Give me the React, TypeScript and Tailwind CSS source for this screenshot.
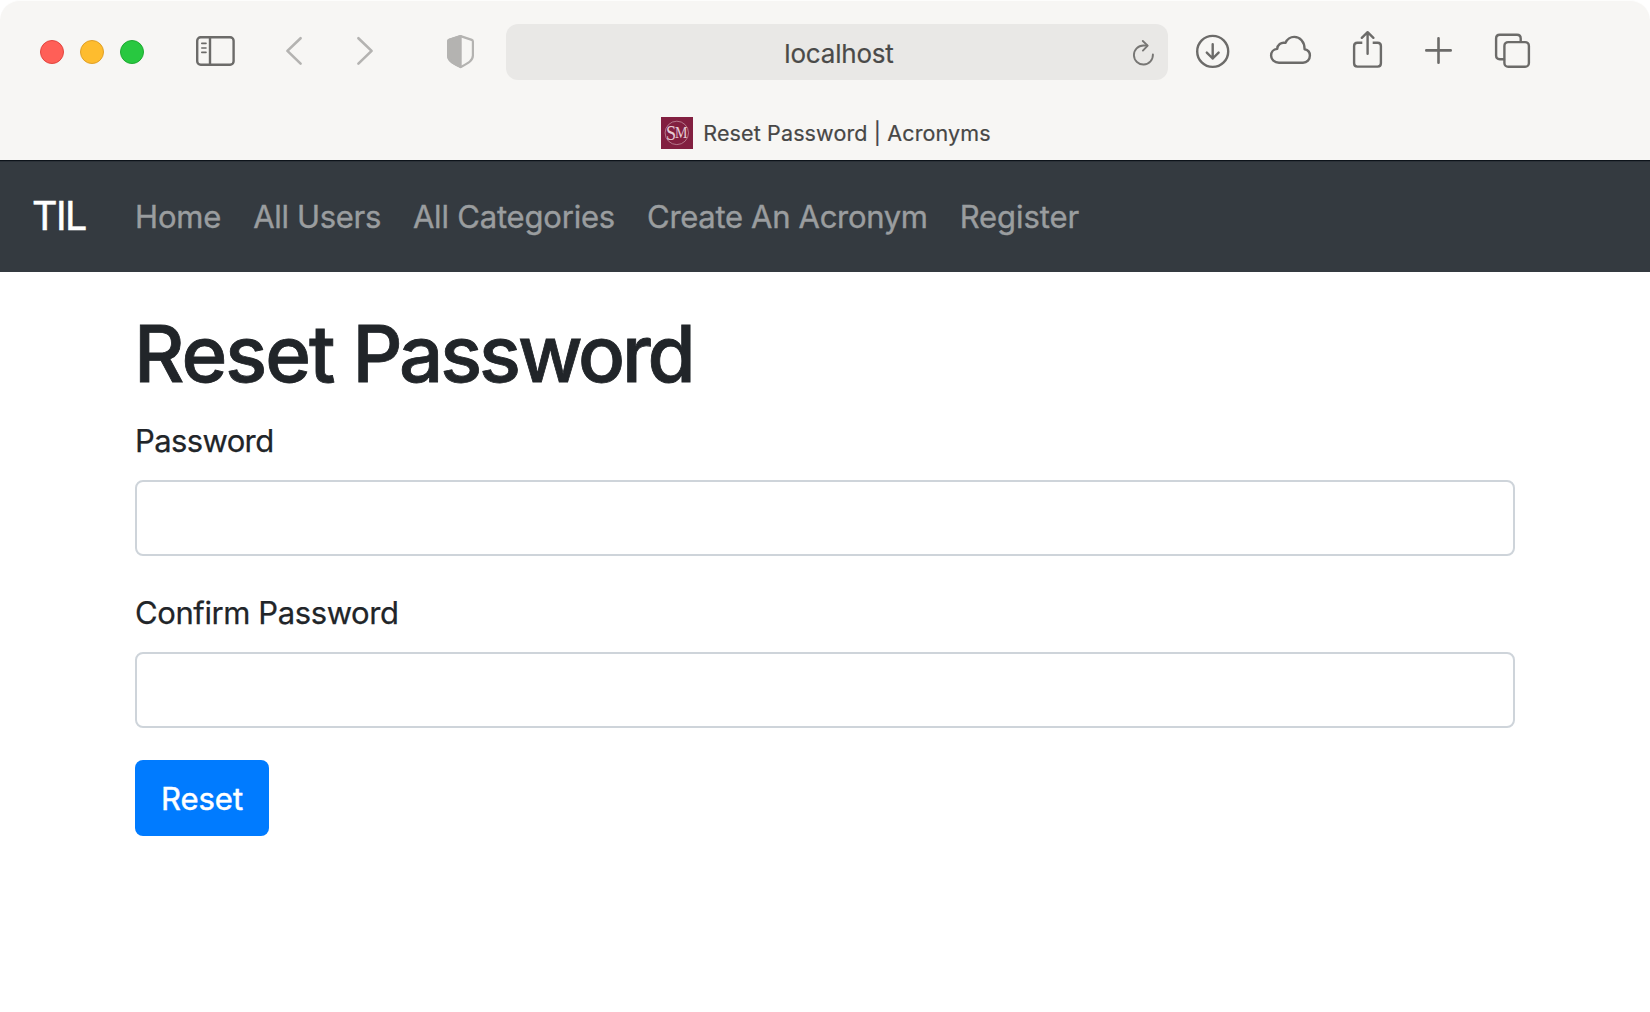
import type { ReactNode } from "react";

function Icon({ width, className, children }: { width: number; className: string; children: ReactNode }) {
  return (
    <svg
      width={width}
      height={44}
      viewBox={`0 0 ${width} 44`}
      fill="none"
      stroke="currentColor"
      strokeWidth={2.4}
      strokeLinecap="round"
      strokeLinejoin="round"
      className={`shrink-0 ${className}`}
    >
      {children}
    </svg>
  );
}

function Toolbar() {
  return (
    <div className="flex h-[102px] items-center pl-10 text-[#6c6b69]">
      <div className="flex gap-4">
        <span className="size-6 rounded-full border border-[#e2463f] bg-[#ff5f57]" />
        <span className="size-6 rounded-full border border-[#e0a028] bg-[#febc2e]" />
        <span className="size-6 rounded-full border border-[#1eaa31] bg-[#28c840]" />
      </div>

      <Icon width={41} className="ml-[51px]">
        <rect x="2.2" y="7.2" width="36.4" height="27.5" rx="3.5" />
        <path d="M15 7.2V34.7" />
        <path d="M6.8 13.4H11M6.8 18H11M6.8 22.4H11" strokeWidth="1.6" />
      </Icon>
      <Icon width={18} className="ml-[49px] text-[#b4b3b1]">
        <path d="M15.6 8.2 2.4 20.9 15.6 33.6" strokeWidth="2.6" />
      </Icon>
      <Icon width={18} className="ml-[53px] text-[#b4b3b1]">
        <path d="M2.4 8.2 15.6 20.9 2.4 33.6" strokeWidth="2.6" />
      </Icon>
      <Icon width={29} className="ml-[72px] text-[#b4b3b1]">
        <path d="M14.6 6.1 3.2 9.9Q2.1 10.3 2.1 11.5V25.5C2.1 31.3 8.6 33.9 14.6 37Z" fill="currentColor" strokeWidth="2.2" />
        <path
          d="M14.6 6.1 3.2 9.9Q2.1 10.3 2.1 11.5V25.5C2.1 31.3 8.6 33.9 14.6 37C20.6 33.9 26.9 31.3 26.9 25.5V11.5Q26.9 10.3 25.8 9.9Z"
          strokeWidth="2.2"
        />
      </Icon>

      <div className="ml-[31px] flex h-14 w-[662px] shrink-0 items-center rounded-xl bg-[#e9e8e6] pr-[13px] pl-[40px]">
        <span className="flex-1 pt-1 text-center text-[26px] leading-8 tracking-[-0.2px] text-[#4a4a49] [-webkit-text-stroke:0.2px]">
          localhost
        </span>
        <Icon width={23} className="text-[#777674]">
          <path d="M20.9 24.4A9.5 9.5 0 1 1 11.4 15.5H15" strokeWidth="1.9" />
          <path d="M10.8 11 15.7 15.6 10.9 20.6" strokeWidth="1.9" />
        </Icon>
      </div>

      <Icon width={36} className="ml-[27px]">
        <circle cx="17.7" cy="21.4" r="15.5" />
        <path d="M17.7 14.2V28.6M11.8 22.6 17.7 28.5 23.6 22.6" />
      </Icon>
      <Icon width={43} className="ml-[38px]">
        <path d="M10 32.7C5.5 32.7 2.1 29.5 2.1 25.4C2.1 22 4.5 19.3 8.2 18.9C8.4 14.8 12 11.9 16.4 12.9C18.2 9.2 21.5 6.9 25.2 6.9C31 6.9 35.6 11.6 35.6 19.2C39 19.8 40.9 22.2 40.9 25.6C40.9 29.6 38 32.7 34 32.7Z" />
      </Icon>
      <Icon width={31} className="ml-[40px]">
        <path d="M10.3 12.8H5.4Q2.1 12.8 2.1 16.1V33.3Q2.1 36.6 5.4 36.6H25.6Q28.9 36.6 28.9 33.3V16.1Q28.9 12.8 25.6 12.8H20.7" strokeLinecap="butt" />
        <path d="M15.6 2.3V23.8M9.8 7.8 15.6 2.2 21.4 7.8" />
      </Icon>
      <Icon width={29} className="ml-[41px]">
        <path d="M14.5 8.2V32.7M2.3 20.4H26.7" strokeWidth="2.6" />
      </Icon>
      <Icon width={37} className="ml-[41px]">
        <rect x="10.4" y="12.1" width="24.5" height="24.6" rx="3.8" />
        <path d="M10 29.2H5.8Q2.1 29.2 2.1 25.5V8.5Q2.1 4.8 5.8 4.8H23Q26.7 4.8 26.7 8.5V11.8" />
      </Icon>
    </div>
  );
}

function Favicon() {
  return (
    <svg width="32" height="32" viewBox="0 0 32 32" className="shrink-0">
      <rect width="32" height="32" fill="#821f40" />
      <circle cx="15.8" cy="15.9" r="11.7" fill="none" stroke="#c08b9c" strokeWidth="0.8" />
      <text x="5" y="22.8" fill="#e6ccd4" fontFamily="Liberation Serif, serif" fontSize="22" textLength="21.6" lengthAdjust="spacingAndGlyphs">
        S
        <tspan dx="-1.2" dy="-1.6" fontSize="17">M</tspan>
      </text>
    </svg>
  );
}

function Field({ label, id, tracking }: { label: string; id: string; tracking: string }) {
  return (
    <div className="mb-8">
      <label htmlFor={id} className={`block pt-0.5 text-[31px] leading-[46px] [-webkit-text-stroke:0.25px] ${tracking}`}>
        {label}
      </label>
      <input
        id={id}
        type="password"
        className="mt-4 block h-[76px] w-full rounded-lg border-2 border-[#ced4da] bg-white px-6 text-[31px] outline-none"
      />
    </div>
  );
}

export default function App() {
  return (
    <div className="h-[1012px] w-[1650px] overflow-hidden bg-white font-['Inter',sans-serif] text-[#212529]">
      <header className="h-40 rounded-t-[20px] border-t border-[#fdfdfc] bg-[#f7f6f4]">
        <Toolbar />
        <div className="flex items-center justify-center gap-2.5 pt-3.5 pl-0.5">
          <Favicon />
          <span className="text-[21.5px] leading-8 tracking-[0.13px] text-[#474746] [-webkit-text-stroke:0.2px]">Reset Password | Acronyms</span>
        </div>
      </header>

      <nav className="flex h-28 items-center border-t border-[#0d131a] bg-[#343a40] pl-8 shadow-[inset_0_1px_0_#2a3037]">
        <a className="w-[103px] pb-0.5 text-[39.5px] leading-15 tracking-[-1.5px] text-white [-webkit-text-stroke:0.5px]">TIL</a>
        <div className="flex gap-8 text-[31px] leading-12 whitespace-nowrap text-[#9a9d9f] [-webkit-text-stroke:0.4px]">
          <a className="tracking-[-0.16px]">Home</a>
          <a className="tracking-[-0.33px]">All Users</a>
          <a className="tracking-[-0.19px]">All Categories</a>
          <a className="tracking-[-0.31px]">Create An Acronym</a>
          <a className="tracking-[-0.08px]">Register</a>
        </div>
      </nav>

      <main className="px-[135px] pt-[34px]">
        <h1 className="mb-3.5 -ml-px text-[78px] leading-24 font-medium tracking-[-3.15px] [-webkit-text-stroke:0.8px]">
          <span className="tracking-[-2px]">Reset </span>Password
        </h1>
        <form>
          <Field label="Password" id="password" tracking="tracking-[-0.62px]" />
          <Field label="Confirm Password" id="confirmPassword" tracking="tracking-[-0.4px]" />
          <button
            type="button"
            className="h-[76px] w-[134px] rounded-lg bg-[#007bff] pt-0.5 text-[31px] leading-12 text-white [-webkit-text-stroke:0.5px]"
          >
            Reset
          </button>
        </form>
      </main>
    </div>
  );
}
